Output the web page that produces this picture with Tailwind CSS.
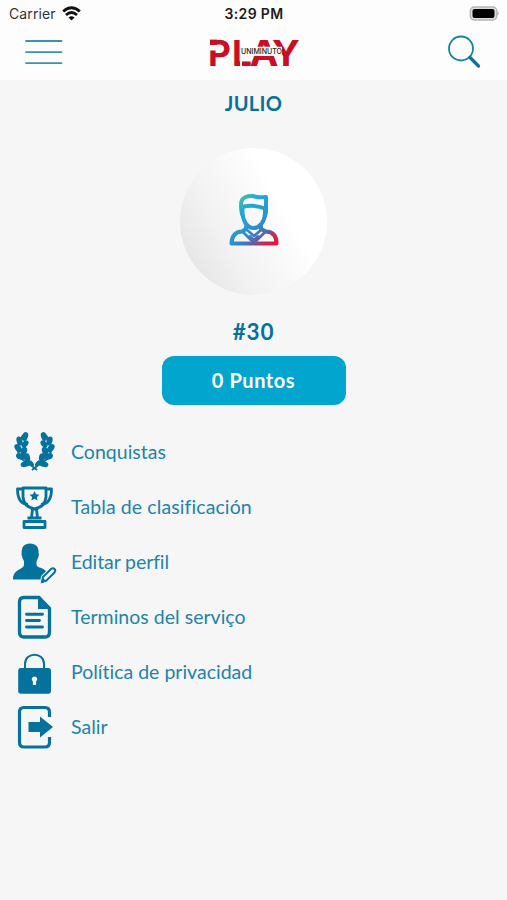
<!DOCTYPE html>
<html lang="es">
<head>
<meta charset="utf-8">
<title>Perfil</title>
<script src="https://cdn.jsdelivr.net/npm/@tailwindcss/browser@4"></script>
</head>
<body class="w-[507px] h-[900px] overflow-hidden bg-[#f6f6f6] text-[#04729d] font-['Lato','Liberation_Sans',sans-serif]">
<header class="h-20 bg-[#fdfdfd]">
  <div class="h-7 grid grid-cols-3 items-center pl-[9px] pr-[7px] text-[#1c1c1c] font-['Inter','Liberation_Sans',sans-serif]">
    <div class="flex items-center gap-[6px]">
      <span class="text-[14px] leading-7 tracking-[0.1px] text-[#333]">Carrier</span>
      <svg class="w-[19px] h-[15px] -mt-[2px]" viewBox="0 0 19 15" fill="none" stroke="#111" stroke-width="2.8"><path d="M1.2 5.5Q9.5-2 17.8 5.500M4 9Q9.500 4 15 9"/><path d="M6.500 11.500Q9.500 8.800 12.500 11.500L9.500 14.500Z" fill="#111" stroke="none"/></svg>
    </div>
    <span class="text-center text-[14px] leading-7 font-semibold tracking-[0.35px] -ml-[1px]">3:29 PM</span>
    <svg class="justify-self-end w-[31px] h-[16px]" viewBox="0 0 31 16"><rect x="1.300" y="1" width="26.500" height="13" rx="4" fill="#ddd" stroke="#b5b5b5" stroke-width="1.400"/><rect x="3.500" y="3" width="22" height="9" rx="2" fill="#000"/><path d="M28.500 5Q31 7.500 28.500 10Z" fill="#aaa"/></svg>
  </div>
  <div class="h-[52px] flex justify-between items-start pl-[25px] pr-[26px]">
    <svg class="w-[38px] h-[28px] mt-[11px]" viewBox="0 0 38 28" stroke="#3d91b0" stroke-width="1.800" stroke-linecap="round"><path d="M1 2H36.500M1 13.100H36.500M1 24.100H36.500"/></svg>
    <svg class="w-[92px] h-[32px] mt-[9px] -ml-[1px] overflow-visible" viewBox="208 37 92 32">
      <g fill="#c90f24" font-family="Inter, 'Liberation Sans', sans-serif" font-weight="700" font-size="36">
        <text transform="translate(207 65.800) scale(.98 1)">P</text>
        <text transform="translate(231 65.800) scale(.98 1)">L</text>
        <text transform="translate(248.500 65.800) scale(1.080 1)">A</text>
        <text transform="translate(271 65.800) scale(1.060 1)">Y</text>
      </g>
      <g fill="#fdfdfd"><path d="M239.500 46.800H281V56H239.500ZM208 45H215.200V50.500H208ZM239 56H241V67H239Z"/></g>
      <path d="M209 39.600H216V45H209Z" fill="#c90f24"/>
      <text x="240" y="54" textLength="41" lengthAdjust="spacingAndGlyphs" fill="#222" font-family="Inter, 'Liberation Sans', sans-serif" font-weight="500" font-size="7.300">UNIMINUTO</text>
    </svg>
    <svg class="w-[34px] h-[34px] mt-[7px]" viewBox="447 35 34 34" fill="none" stroke="#1682a8"><circle cx="461" cy="48.500" r="12" stroke-width="1.800"/><path d="M470 57.500L478.500 66" stroke-width="3.200" stroke-linecap="round" stroke="#0b7599"/></svg>
  </div>
</header>
<main>
  <section class="flex flex-col items-center">
    <h1 class="mt-[9px] h-7 text-[20px] leading-[29px] font-bold tracking-[0.3px]">JULIO</h1>
    <div class="mt-[31px] w-[147px] h-[147px] rounded-full bg-[linear-gradient(60deg,#e2e2e2_5%,#f2f2f2_33%,#fff_68%)] flex justify-center">
      <svg class="w-[52px] h-[56px] mt-[44px]" viewBox="228 192 52 56" fill="none" stroke="url(#person)" stroke-width="4" stroke-linejoin="round" stroke-linecap="round">
        <defs><linearGradient id="person" gradientUnits="userSpaceOnUse" x1="238" y1="198" x2="275" y2="246"><stop offset="0" stop-color="#48bfa0"/><stop offset=".22" stop-color="#20a7dc"/><stop offset=".55" stop-color="#2c91ce"/><stop offset=".73" stop-color="#5664ac"/><stop offset=".87" stop-color="#d6204b"/><stop offset="1" stop-color="#e31b36"/></linearGradient></defs>
        <path d="M242 214Q240 204 242 200Q245 195.500 253 196Q259 198 266 197V212L265 216M242 207Q254 204 265 208.500"/>
        <path d="M242.500 207V213C243 221 247 228 253.500 228C260 228 265 221 265 213V208"/>
        <path d="M246 226.500V229L242 231.500Q232 232 231.500 243.500H276.500Q276.500 232 266 231.500L261 229V226.500"/>
        <path d="M243 232L254 243L265 232M247 230L254 236L261 230M250 236.500L257 243M258 236.500L251 243" stroke-width="2.800"/>
      </svg>
    </div>
    <div class="mt-[22px] h-[30px] text-[22.500px] leading-[30px] font-bold tracking-[0.8px]">#30</div>
    <button class="mt-[9px] w-[184px] h-[49px] rounded-[12px] bg-[#02a5cd] text-white text-[20px] leading-[49px] font-bold tracking-[0.550px]">0 Puntos</button>
  </section>
  <ul class="mt-[19px] text-[19.500px] leading-[55px] text-[#2383aa] [font-variant-ligatures:none]">
    <li class="h-[55px] flex items-center">
      <svg class="w-[71px] h-[55px] shrink-0" viewBox="0 424 71 55" fill="#04729d">
        <defs><g id="branch"><path d="M23 435Q12 453 25 461.500Q31 465 37 470" fill="none" stroke="#04729d" stroke-width="1.800"/><ellipse cx="25" cy="436.500" rx="2.900" ry="4.600" transform="rotate(20 25 436.500)"/><ellipse cx="19.500" cy="441" rx="2.900" ry="4.600" transform="rotate(-16 19.500 441)"/><ellipse cx="25" cy="444" rx="2.800" ry="4.200" transform="rotate(40 25 444)"/><ellipse cx="18.200" cy="448.300" rx="3" ry="4.700" transform="rotate(-38 18.200 448.300)"/><ellipse cx="24" cy="451" rx="3" ry="4.300" transform="rotate(20 24 451)"/><ellipse cx="20.500" cy="456.500" rx="3.100" ry="4.700" transform="rotate(-68 20.500 456.500)"/><ellipse cx="27" cy="457.500" rx="3.100" ry="4.300" transform="rotate(-10 27 457.500)"/><ellipse cx="25.500" cy="464" rx="2.900" ry="5" transform="rotate(-105 25.500 464)"/><ellipse cx="31.200" cy="463.500" rx="2" ry="3.600" transform="rotate(-38 31.200 463.500)"/></g></defs>
        <use href="#branch"/><use href="#branch" transform="translate(69 0) scale(-1 1)"/>
      </svg><span class="tracking-[0.020px]">Conquistas</span></li>
    <li class="h-[55px] flex items-center">
      <svg class="w-[71px] h-[55px] shrink-0" viewBox="0 479 71 55" fill="none" stroke="#04729d" stroke-width="2.800" stroke-linejoin="round"><path d="M23 488H46V497Q45 507 34.500 509Q24 507 23 497Z"/><path d="M23 489H17.500C17.500 498 20 504 28 504.500M46 489H51.500C51.500 498 49 504 41 504.500"/><path d="M32.500 509L31.500 518M36.500 509L37.500 518M27.500 518H41.500M24 521.500H45V527.500H24Z"/><path d="M34.500 491L36 494.300L39.500 494.700L36.900 497.100L37.600 500.600L34.500 498.800L31.400 500.600L32.100 497.100L29.500 494.700L33 494.300Z" fill="#04729d" stroke="none"/></svg>
      <span class="tracking-[0.100px]">Tabla de clasificación</span></li>
    <li class="h-[55px] flex items-center">
      <svg class="w-[71px] h-[55px] shrink-0" viewBox="0 534 71 55" fill="#04729d"><path d="M30 543.500C36 543.500 39 547 38.500 553Q39.500 554 38 558L36.500 561.500V565C38 569 47 567 47.500 575L42 579.500H13C13 569 23 570 24 565V561.500L22.500 558Q21 555 21.700 553C21.500 547 24 543.500 30 543.500Z"/><path d="M42 582L43 577L51 569Q53 567.500 54.500 569Q56 570.500 54.500 572.500L46.500 580.500Z" fill="#f6f6f6" stroke="#f6f6f6" stroke-width="4"/><path d="M42 582L43 577L51 569Q53 567.500 54.500 569Q56 570.500 54.500 572.500L46.500 580.500Z" fill="#f6f6f6" stroke="#04729d" stroke-width="2"/><path d="M41 583L42.500 577.500L46.500 581.500Z"/></svg>
      <span class="-tracking-[0.100px]">Editar perfil</span></li>
    <li class="h-[55px] flex items-center">
      <svg class="w-[71px] h-[55px] shrink-0" viewBox="0 589 71 55" fill="none" stroke="#04729d" stroke-width="3.300" stroke-linecap="round"><path d="M39 597.500H24Q19.500 597.500 19.500 602V632Q19.500 637 24 637H45Q49.500 637 49.500 632V608.500L39 597.500Z"/><path d="M38 597.500H40L50 607.500V609H38Z" fill="#04729d" stroke="none"/><path d="M26.500 614.300H42.500M26.500 620.500H39.500M26.500 627H42.500" stroke-width="2.900"/></svg>
      <span class="tracking-[0.020px]">Terminos del serviço</span></li>
    <li class="h-[55px] flex items-center">
      <svg class="w-[71px] h-[55px] shrink-0" viewBox="0 644 71 55" fill="#04729d"><path d="M25 670V664C25 651.500 44 651.500 44 664V670" fill="none" stroke="#04729d" stroke-width="2"/><rect x="18.200" y="668" width="32.800" height="25.800" rx="2.700"/><path d="M34.500 676.500a2.700 2.700 0 0 1 1.600 4.900V685h-3.200v-3.600a2.700 2.700 0 0 1 1.600-4.900Z" fill="#f6f6f6"/></svg>
      <span>Política de privacidad</span></li>
    <li class="h-[55px] flex items-center">
      <svg class="w-[71px] h-[55px] shrink-0" viewBox="0 699 71 55" fill="none" stroke="#04729d" stroke-width="3.200"><path d="M49.500 717V712Q49.500 707.500 45 707.500H24Q19.500 707.500 19.500 712V742.500Q19.500 747 24 747H45Q49.500 747 49.500 742.500V737"/><path d="M28.500 722H40V716.500L53 727L40 737.500V732H28.500Z" fill="#04729d" stroke="none"/></svg>
      <span>Salir</span></li>
  </ul>
</main>
</body>
</html>
